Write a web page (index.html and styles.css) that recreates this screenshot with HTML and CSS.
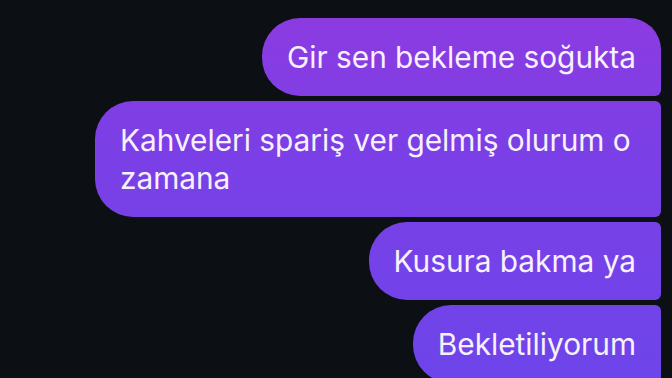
FILE: index.html
```html
<!DOCTYPE html>
<html lang="tr">
<head>
    <meta charset="UTF-8">
    <meta name="viewport" content="width=device-width, initial-scale=1.0">
    <title>Mesajlar</title>
    <link rel="stylesheet" href="styles.css">
</head>
<body>
    <div class="chat">
        <div class="msg first">Gir sen bekleme soğukta</div>
        <div class="msg">Kahveleri spariş ver gelmiş olurum o zamana</div>
        <div class="msg">Kusura bakma ya</div>
        <div class="msg last">Bekletiliyorum</div>
    </div>
</body>
</html>
```

FILE: styles.css
```css
*{
    margin: 0;
    padding: 0;
    box-sizing: border-box;
}
body{
    background-color: #0c0f14;
    font-family: Inter, "Noto Sans", sans-serif;
    height: 378px;
    overflow: hidden;
}
.chat{
    display: flex;
    flex-direction: column;
    align-items: flex-end;
    gap: 5px;
    padding: 18px 11px 0 0;
}
/* 消息气泡 */
.msg{
    max-width: 566px;
    padding: 20px 25px;
    font-size: 29.8px;
    line-height: 38px;
    color: #f7f0fd;
    border-radius: 38px 6px 6px 38px;
    background: linear-gradient(180deg, #8d3be0 0px, #7b3fe6 150px, #6d45ea 378px) fixed;
}
.first{
    border-top-right-radius: 32px;
}
```
